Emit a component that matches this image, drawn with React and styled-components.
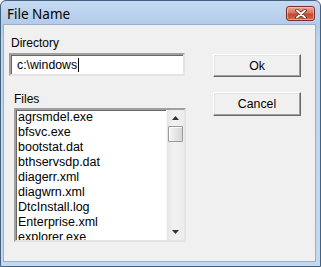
import React from "react";
import styled, { createGlobalStyle } from "styled-components";

const Global = createGlobalStyle`
  html, body { margin: 0; padding: 0; background: #fff; }
  body { font-family: "Liberation Sans", Arial, sans-serif; }
`;

const Window = styled.div`
  box-sizing: border-box;
  width: 321px;
  height: 267px;
  display: flex;
  flex-direction: column;
  border: 1px solid #44617f;
  border-radius: 6px 6px 0 0;
  background: linear-gradient(180deg, #c6daf1 0px, #b2cbea 24px, #bcd4ee 40px, #c3d9f0 100%);
  padding: 0 4px 4px 2px;
  overflow: hidden;
`;

const TitleBar = styled.div`
  height: 23px;
  display: flex;
  align-items: flex-start;
  justify-content: space-between;
  flex: none;
`;

const Title = styled.span`
  font-family: "Noto Sans", "Open Sans", sans-serif;
  font-size: 13.5px;
  line-height: 16px;
  color: #000;
  margin: 5px 0 0 4px;
`;

const CloseButton = styled.div`
  box-sizing: border-box;
  width: 29px;
  height: 15px;
  margin: 5px 1px 0 0;
  border: 1px solid #7a2f26;
  border-radius: 3px;
  background: linear-gradient(180deg, #eaa898 0%, #d8735e 45%, #c3472f 55%, #d06b51 100%);
  display: flex;
  align-items: center;
  justify-content: center;
  box-shadow: inset 0 0 0 1px rgba(255, 220, 210, 0.5);
`;

const Body = styled.div`
  flex: 1;
  background: #f0f0f0;
  border: 1px solid #97afcb;
  display: flex;
  padding: 11px 0 0 5px;
`;

const LeftCol = styled.div`
  width: 180px;
  display: flex;
  flex-direction: column;
`;

const RightCol = styled.div`
  display: flex;
  flex-direction: column;
  gap: 15px;
  margin-left: 24px;
  padding-top: 18px;
`;

const Label = styled.div`
  font-size: 12px;
  line-height: 15px;
  color: #000;
  margin-left: ${(p) => p.$indent}px;
  margin-top: ${(p) => p.$top || 0}px;
`;

const Input = styled.div`
  box-sizing: border-box;
  width: 176px;
  height: 23px;
  margin-top: 2px;
  background: #fff;
  border-style: solid;
  border-width: 2px;
  border-color: #a0a0a0 #e3e3e3 #e3e3e3 #a0a0a0;
  box-shadow: inset 1px 1px 0 #696969;
  display: flex;
  align-items: center;
  padding-left: 6px;
  font-size: 12.3px;
  color: #000;
`;

const Caret = styled.span`
  display: inline-block;
  width: 1px;
  height: 14px;
  background: #000;
  margin-left: 1px;
`;

const ListBox = styled.div`
  box-sizing: border-box;
  width: 172px;
  height: 134px;
  margin: 1px 0 0 5px;
  background: #fff;
  border-style: solid;
  border-width: 2px;
  border-color: #a0a0a0 #e3e3e3 #e3e3e3 #a0a0a0;
  box-shadow: inset 1px 1px 0 #696969;
  display: flex;
  overflow: hidden;
`;

const Items = styled.div`
  flex: 1;
  padding-left: 2px;
  overflow: hidden;
`;

const Item = styled.div`
  font-size: 12.5px;
  line-height: 15px;
  height: 15px;
  color: #000;
  white-space: nowrap;
`;

const ScrollBar = styled.div`
  width: 17px;
  display: flex;
  flex-direction: column;
  background: linear-gradient(90deg, #e6e6e6, #f2f2f2 40%, #ececec);
  border-left: 1px solid #f8f8f8;
`;

const Arrow = styled.div`
  height: 16px;
  display: flex;
  align-items: center;
  justify-content: center;
  flex: none;
`;

const Track = styled.div`
  flex: 1;
`;

const Thumb = styled.div`
  box-sizing: border-box;
  height: 16px;
  margin-left: 1px;
  width: 15px;
  border: 1px solid #9a9a9a;
  border-radius: 1px;
  background: linear-gradient(90deg, #f6f6f6, #e6e6e6 50%, #d6d6d6);
  box-shadow: inset 1px 1px 0 #fff;
`;

const Button = styled.div`
  box-sizing: border-box;
  width: 88px;
  height: ${(p) => p.$h}px;
  background: #f0f0f0;
  border-style: solid;
  border-width: 1px;
  border-color: #fff #696969 #696969 #fff;
  box-shadow: inset -1px -1px 0 #a0a0a0, inset 1px 1px 0 #e3e3e3;
  display: flex;
  align-items: center;
  justify-content: center;
  font-size: 12.3px;
  color: #000;
`;

const files = [
  "agrsmdel.exe",
  "bfsvc.exe",
  "bootstat.dat",
  "bthservsdp.dat",
  "diagerr.xml",
  "diagwrn.xml",
  "DtcInstall.log",
  "Enterprise.xml",
  "explorer.exe",
];

export default function App() {
  return (
    <>
      <Global />
      <Window>
        <TitleBar>
          <Title>File Name</Title>
          <CloseButton>
            <svg width="12" height="10" viewBox="0 0 12 10">
              <path d="M2 1.5 L10 8.5 M10 1.5 L2 8.5" stroke="#5a2018" strokeWidth="3.4" strokeLinecap="round" fill="none" />
              <path d="M2 1.5 L10 8.5 M10 1.5 L2 8.5" stroke="#fff" strokeWidth="2" strokeLinecap="round" fill="none" />
            </svg>
          </CloseButton>
        </TitleBar>
        <Body>
          <LeftCol>
            <Label $indent={2}>Directory</Label>
            <Input>
              c:\windows
              <Caret />
            </Input>
            <Label $indent={5} $top={16}>Files</Label>
            <ListBox>
              <Items>
                {files.map((f) => (
                  <Item key={f}>{f}</Item>
                ))}
              </Items>
              <ScrollBar>
                <Arrow>
                  <svg width="7" height="4" viewBox="0 0 7 4">
                    <path d="M0 4 L3.5 0 L7 4 Z" fill="#333" />
                  </svg>
                </Arrow>
                <Thumb />
                <Track />
                <Arrow>
                  <svg width="7" height="4" viewBox="0 0 7 4">
                    <path d="M0 0 L7 0 L3.5 4 Z" fill="#333" />
                  </svg>
                </Arrow>
              </ScrollBar>
            </ListBox>
          </LeftCol>
          <RightCol>
            <Button $h={23}>Ok</Button>
            <Button $h={24}>Cancel</Button>
          </RightCol>
        </Body>
      </Window>
    </>
  );
}
